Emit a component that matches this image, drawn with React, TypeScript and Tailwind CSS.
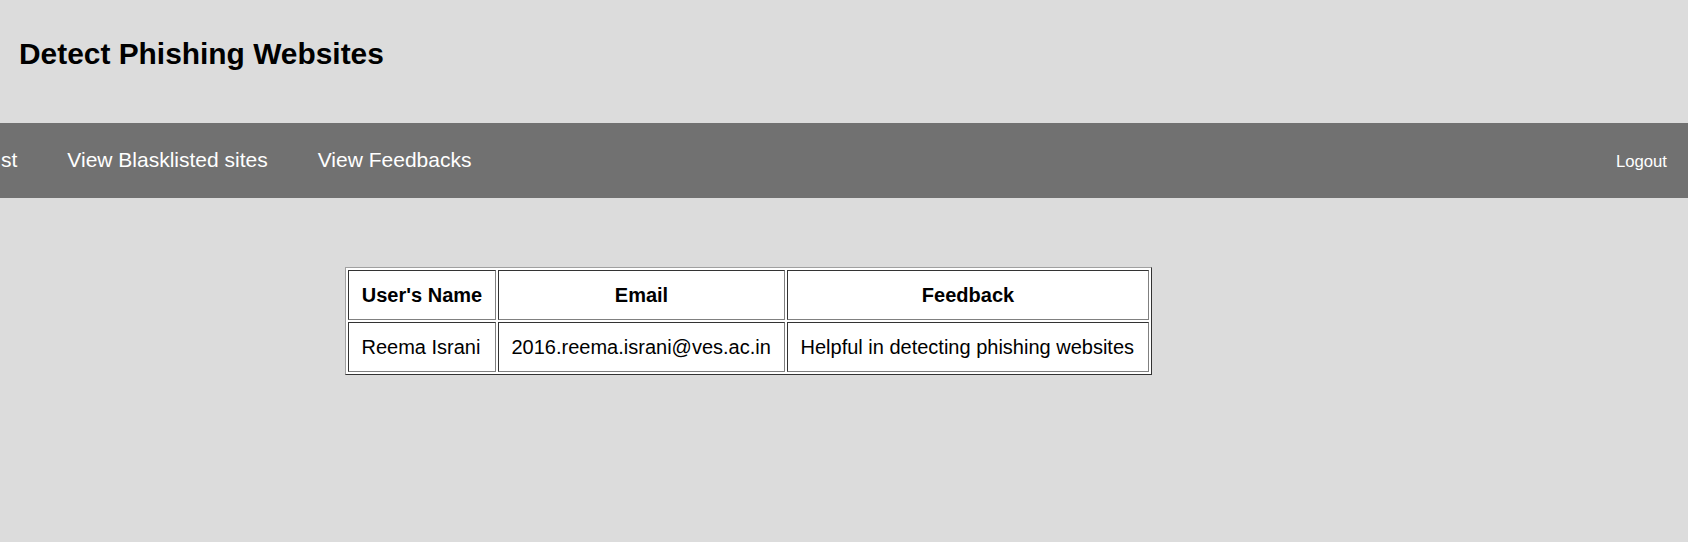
const links = ["st", "View Blasklisted sites", "View Feedbacks"];

const feedbacks = [
  {
    name: "Reema Israni",
    email: "2016.reema.israni@ves.ac.in",
    feedback: "Helpful in detecting phishing websites",
  },
];

export default function App() {
  return (
    <div className="min-h-[542px] bg-[#dcdcdc] font-['Liberation_Sans',Arial,sans-serif] text-black">
      <header className="h-[123px] pl-[19px] pt-[37px]">
        <h2 className="text-[29.9px] font-bold leading-[34px]">Detect Phishing Websites</h2>
      </header>

      <nav className="flex h-[75px] items-start overflow-hidden bg-[#717171] pt-[25px] text-white">
        {links.map((link, i) => (
          <a
            key={link}
            href="#"
            className={`text-[21px] leading-[24px] ${i === 0 ? "pl-[1px] pr-[25px]" : "px-[25px]"}`}
          >
            {link}
          </a>
        ))}
        <a href="#" className="ml-auto pr-[21px] pt-[4px] text-[16.7px] leading-[20px]">
          Logout
        </a>
      </nav>

      <div className="pl-[345px] pt-[69px]">
        <table className="border-separate border-spacing-[2px] border border-t-[#a0a0a0] border-l-[#a0a0a0] border-b-[#333] border-r-[#333] bg-white text-[20px] leading-[23px]">
          <thead>
            <tr>
              <th className="w-[148px] border border-t-[#333] border-l-[#333] border-b-[#808080] border-r-[#808080] p-[12.5px] text-center font-bold">
                User's Name
              </th>
              <th className="w-[287px] border border-t-[#333] border-l-[#333] border-b-[#808080] border-r-[#808080] p-[12.5px] text-center font-bold">
                Email
              </th>
              <th className="w-[362px] border border-t-[#333] border-l-[#333] border-b-[#808080] border-r-[#808080] p-[12.5px] text-center font-bold">
                Feedback
              </th>
            </tr>
          </thead>
          <tbody>
            {feedbacks.map((row) => (
              <tr key={row.email}>
                <td className="border border-t-[#333] border-l-[#333] border-b-[#808080] border-r-[#808080] p-[12.5px]">
                  {row.name}
                </td>
                <td className="border border-t-[#333] border-l-[#333] border-b-[#808080] border-r-[#808080] p-[12.5px]">
                  {row.email}
                </td>
                <td className="border border-t-[#333] border-l-[#333] border-b-[#808080] border-r-[#808080] p-[12.5px]">
                  {row.feedback}
                </td>
              </tr>
            ))}
          </tbody>
        </table>
      </div>
    </div>
  );
}
